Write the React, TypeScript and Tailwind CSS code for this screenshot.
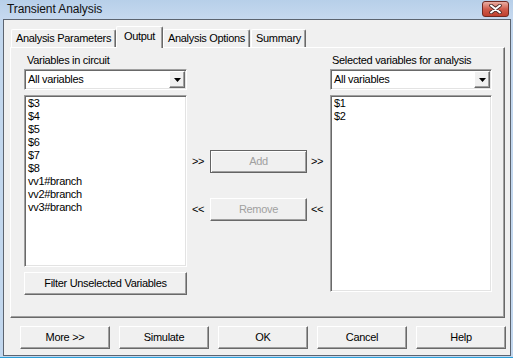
import React from 'react';

const sunken =
  'border border-t-[#a0a0a0] border-l-[#a0a0a0] border-r-white border-b-white shadow-[inset_1px_1px_0_#696969,inset_-1px_-1px_0_#e3e3e3]';
const raised =
  'border border-t-white border-l-white border-r-[#696969] border-b-[#696969] shadow-[inset_-1px_-1px_0_#a0a0a0]';

function Combo() {
  return (
    <div className={`h-[21px] bg-white flex items-center ${sunken}`}>
      <span className="flex-1 pl-[3px] leading-[13px]">All variables</span>
      <div className={`w-[16px] h-[17px] mr-[1px] bg-[#f0f0f0] flex items-center justify-center ${raised}`}>
        <svg width="7" height="4" viewBox="0 0 7 4">
          <path d="M0 0h7L3.5 4z" fill="#000" />
        </svg>
      </div>
    </div>
  );
}

function ListBox({ items, h }: { items: string[]; h: string }) {
  return (
    <div className={`${h} bg-white pt-[1px] pl-[3px] flex flex-col ${sunken}`}>
      {items.map((it) => (
        <div key={it} className="leading-[13px] h-[13px]">
          {it}
        </div>
      ))}
    </div>
  );
}

function Btn({ label, className = '' }: { label: string; className?: string }) {
  return (
    <div className={`h-[23px] bg-[#f0f0f0] flex items-center justify-center ${raised} ${className}`}>
      {label}
    </div>
  );
}

function Tab({ label, w, active = false, className = '' }: { label: string; w: string; active?: boolean; className?: string }) {
  return (
    <div
      className={`${w} ${
        active ? 'h-[22px] -mb-[1px] z-10 pb-[3px]' : 'h-[18px]'
      } relative bg-[#f0f0f0] flex items-center justify-center rounded-t-[2px] border-t border-l border-r border-t-white border-l-white border-r-[#696969] shadow-[inset_-1px_0_0_#a0a0a0] ${className}`}
    >
      {label}
    </div>
  );
}

export default function App() {
  return (
    <div className="w-[513px] h-[359px] overflow-hidden bg-[#c2d7ee] flex flex-col font-['Liberation_Sans',Arial,sans-serif] text-[11px] tracking-[-0.3px] text-black">
      {/* title bar */}
      <div className="h-[19px] flex items-start justify-between pl-[7px] pr-[4px] bg-linear-to-b from-[#b7cfe9] to-[#c6d9ef]">
        <span className="text-[12px] leading-[19px] tracking-[-0.1px] text-[#111]">Transient Analysis</span>
        <div className="mt-[1px] w-[27px] h-[16px] rounded-[3px] border border-[#6f2a22] bg-linear-to-b from-[#e9aea4] via-[#cf5c4c] to-[#c0402f] flex items-center justify-center">
          <svg width="13" height="10" viewBox="0 0 13 10">
            <path d="M2 1.5L11 8.5M11 1.5L2 8.5" stroke="#4a2a28" strokeWidth="3.6" strokeLinecap="round" />
            <path d="M2 1.5L11 8.5M11 1.5L2 8.5" stroke="#fff" strokeWidth="2" strokeLinecap="round" />
          </svg>
        </div>
      </div>

      {/* client area */}
      <div className="ml-[3px] w-[508px] h-[337px] border border-[#5c6470] bg-[#f0f0f0] pt-[6px] pl-[6px]">
        {/* tabs */}
        <div className="h-[21px] flex items-end pl-[1px]">
          <Tab label="Analysis Parameters" w="w-[105px]" />
          <Tab label="Output" w="w-[47px]" active />
          <Tab label="Analysis Options" w="w-[87px]" />
          <Tab label="Summary" w="w-[55px]" className="ml-[1px]" />
        </div>

        {/* panel */}
        <div className="w-[495px] h-[271px] border border-t-white border-l-white border-r-[#696969] border-b-[#696969] shadow-[inset_-1px_-1px_0_#a0a0a0] pl-[13px] pt-[6px] flex">
          <div className="w-[163px] flex flex-col">
            <div className="h-[13px] leading-[13px] pl-[3px]">Variables in circuit</div>
            <div className="mt-[2px]">
              <Combo />
            </div>
            <div className="mt-[5px]">
              <ListBox
                h="h-[172px]"
                items={['$3', '$4', '$5', '$6', '$7', '$8', 'vv1#branch', 'vv2#branch', 'vv3#branch']}
              />
            </div>
            <Btn label="Filter Unselected Variables" className="mt-[5px]" />
          </div>

          <div className="w-[143px] flex flex-col pt-[96px]">
            <div className="flex items-center pl-[5px]">
              <span className="w-[18px]">&gt;&gt;</span>
              <div className="w-[97px] h-[23px] bg-[#f0f0f0] flex items-center justify-center border border-[#646464] shadow-[inset_1px_1px_0_#fff,inset_-1px_-1px_0_#a0a0a0] text-[#a0a0a0]">
                Add
              </div>
              <span className="ml-[4px]">&gt;&gt;</span>
            </div>
            <div className="flex items-center pl-[5px] mt-[25px]">
              <span className="w-[18px]">&lt;&lt;</span>
              <div className={`w-[97px] h-[23px] bg-[#f0f0f0] flex items-center justify-center text-[#a0a0a0] ${raised}`}>
                Remove
              </div>
              <span className="ml-[4px]">&lt;&lt;</span>
            </div>
          </div>

          <div className="w-[162px] flex flex-col">
            <div className="h-[13px] leading-[13px] pl-[2px]">Selected variables for analysis</div>
            <div className="mt-[2px]">
              <Combo />
            </div>
            <div className="mt-[5px]">
              <ListBox h="h-[197px]" items={['$1', '$2']} />
            </div>
          </div>
        </div>

        {/* bottom buttons */}
        <div className="mt-[8px] pl-[10px] flex gap-[9px]">
          <Btn label="More >>" className="w-[90px]" />
          <Btn label="Simulate" className="w-[90px]" />
          <Btn label="OK" className="w-[90px]" />
          <Btn label="Cancel" className="w-[90px]" />
          <Btn label="Help" className="w-[90px]" />
        </div>
      </div>

      {/* frame bottom */}
      <div className="h-[1px] bg-[#c2d7ee]" />
      <div className="h-[1px] bg-[#2c9fd9]" />
      <div className="flex-1 bg-white" />
    </div>
  );
}
